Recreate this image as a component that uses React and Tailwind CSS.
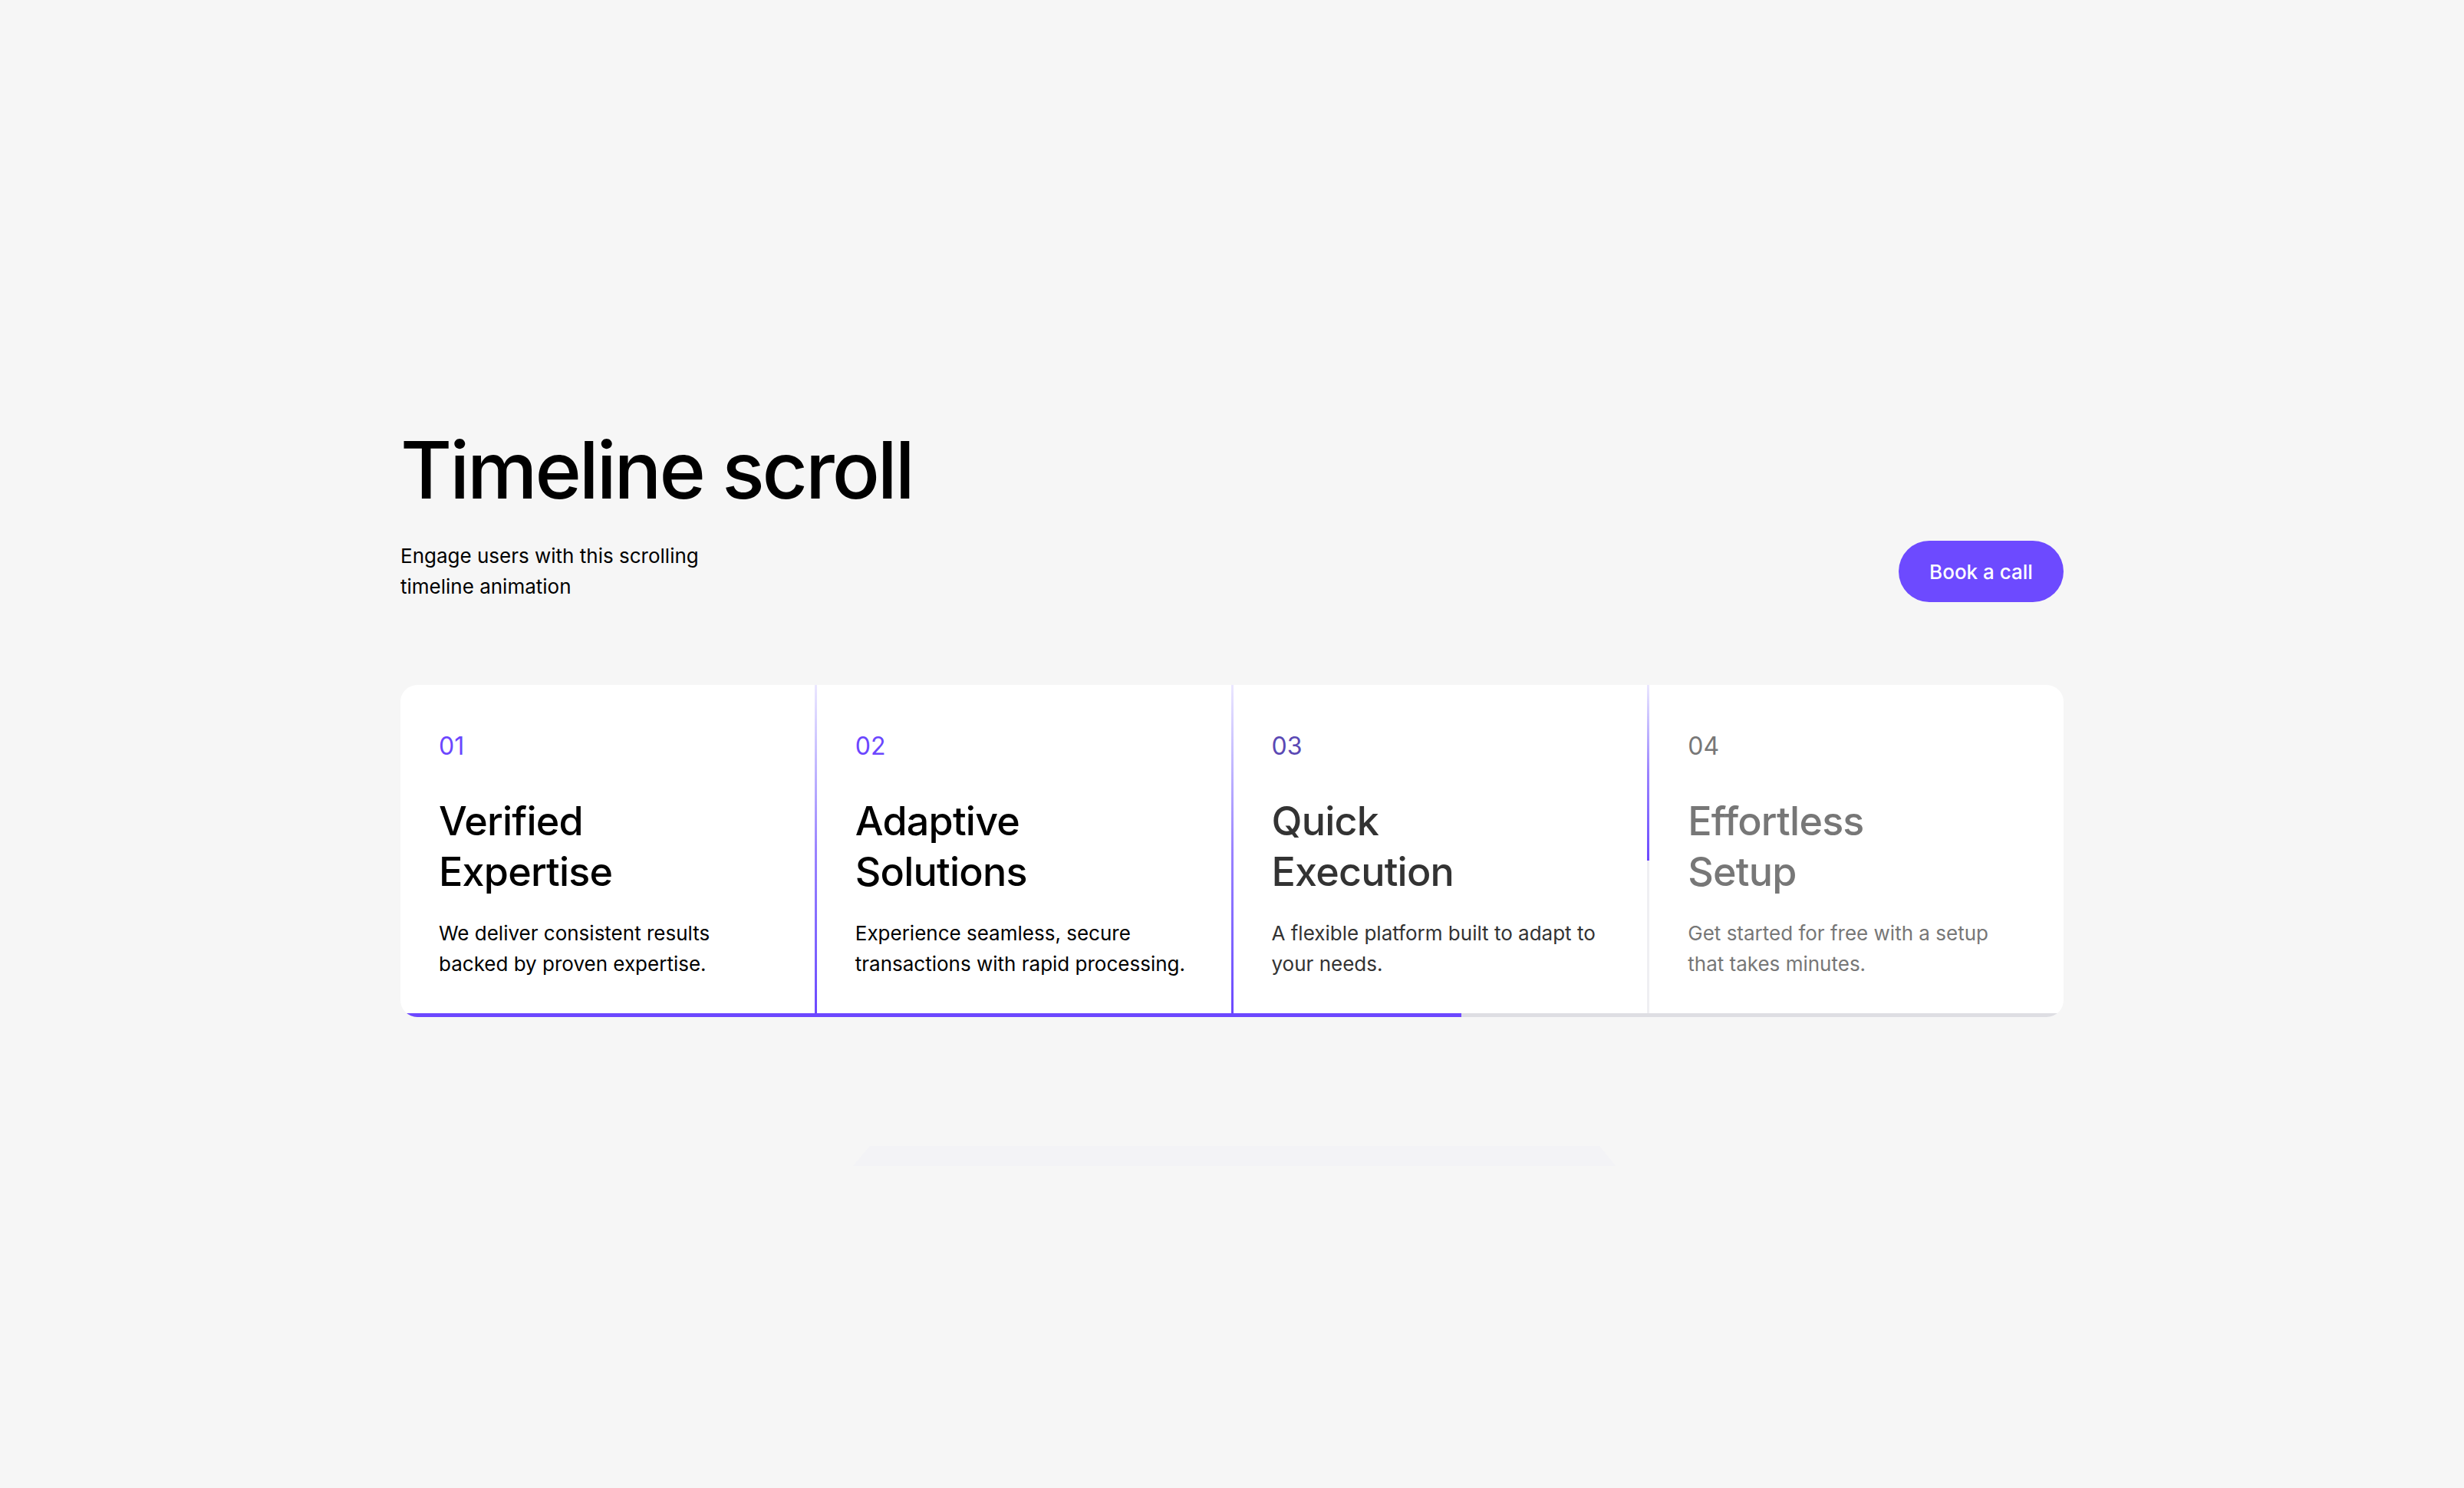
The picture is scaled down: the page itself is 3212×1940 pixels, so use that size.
const steps = [
  {
    num: '01',
    title: ['Verified', 'Expertise'],
    desc: ['We deliver consistent results', 'backed by proven expertise.'],
    numColor: 'text-[#6b46fe]',
    textColor: 'text-black',
  },
  {
    num: '02',
    title: ['Adaptive', 'Solutions'],
    desc: ['Experience seamless, secure', 'transactions with rapid processing.'],
    numColor: 'text-[#6b46fe]',
    textColor: 'text-black',
  },
  {
    num: '03',
    title: ['Quick', 'Execution'],
    desc: ['A flexible platform built to adapt to', 'your needs.'],
    numColor: 'text-[#5a48b4]',
    textColor: 'text-[#333333]',
  },
  {
    num: '04',
    title: ['Effortless', 'Setup'],
    desc: ['Get started for free with a setup', 'that takes minutes.'],
    numColor: 'text-[#777777]',
    textColor: 'text-[#777777]',
  },
];

function Divider({ fill }) {
  // vertical line between steps, fill = how much of it is lit (0..1)
  return (
    <div className="relative w-[3px] shrink-0 self-stretch bg-[#efeff3]">
      <div
        className="absolute left-0 top-0 w-full bg-gradient-to-b from-[#ebe7ff] via-[#9b83ff] to-[#6c47ff]"
        style={{ height: `${fill * 100}%` }}
      />
    </div>
  );
}

function Step({ step }) {
  return (
    <div className="flex-1 min-w-0 pl-[50px] pr-6 pt-[56px] pb-[44px]">
      <div className={`text-[32px] leading-[48px] ${step.numColor}`}>{step.num}</div>
      <h3 className={`mt-[41px] text-[52px] leading-[66px] font-medium tracking-[-0.015em] ${step.textColor}`}>
        {step.title[0]}
        <br />
        {step.title[1]}
      </h3>
      <p className={`mt-[27px] text-[26px] leading-[40px] ${step.textColor}`}>
        {step.desc[0]}
        <br />
        {step.desc[1]}
      </p>
    </div>
  );
}

export default function App() {
  return (
    <div
      className="min-h-[1940px] w-full bg-[#f6f6f6] pt-[561px]"
      style={{ fontFamily: 'Inter, "Noto Sans", sans-serif' }}
    >
      <div className="mx-auto w-[2168px]">
        <h1 className="text-[103px] leading-none font-medium tracking-[-0.03em] text-black">
          Timeline scroll
        </h1>

        <div className="mt-[41px] flex items-end justify-between">
          <p className="text-[26px] leading-[40px] text-black">
            Engage users with this scrolling
            <br />
            timeline animation
          </p>
          <button className="h-[80px] w-[215px] rounded-full bg-[#6d4aff] text-[26px] font-medium text-white">
            Book a call
          </button>
        </div>

        <div className="mt-[108px] overflow-hidden rounded-[22px] bg-white">
          <div className="flex">
            <Step step={steps[0]} />
            <Divider fill={1} />
            <Step step={steps[1]} />
            <Divider fill={1} />
            <Step step={steps[2]} />
            <Divider fill={0.535} />
            <Step step={steps[3]} />
          </div>
          <div className="h-[5px] bg-[#dedee3]">
            <div className="h-full bg-[#6c47ff]" style={{ width: '63.8%' }} />
          </div>
        </div>

        <div className="mt-[168px] ml-[590px] h-[26px] w-[994px] bg-[#f3f3f6] [clip-path:polygon(2.2%_0,97.9%_0,100%_100%,0_100%)]" />
      </div>
    </div>
  );
}
